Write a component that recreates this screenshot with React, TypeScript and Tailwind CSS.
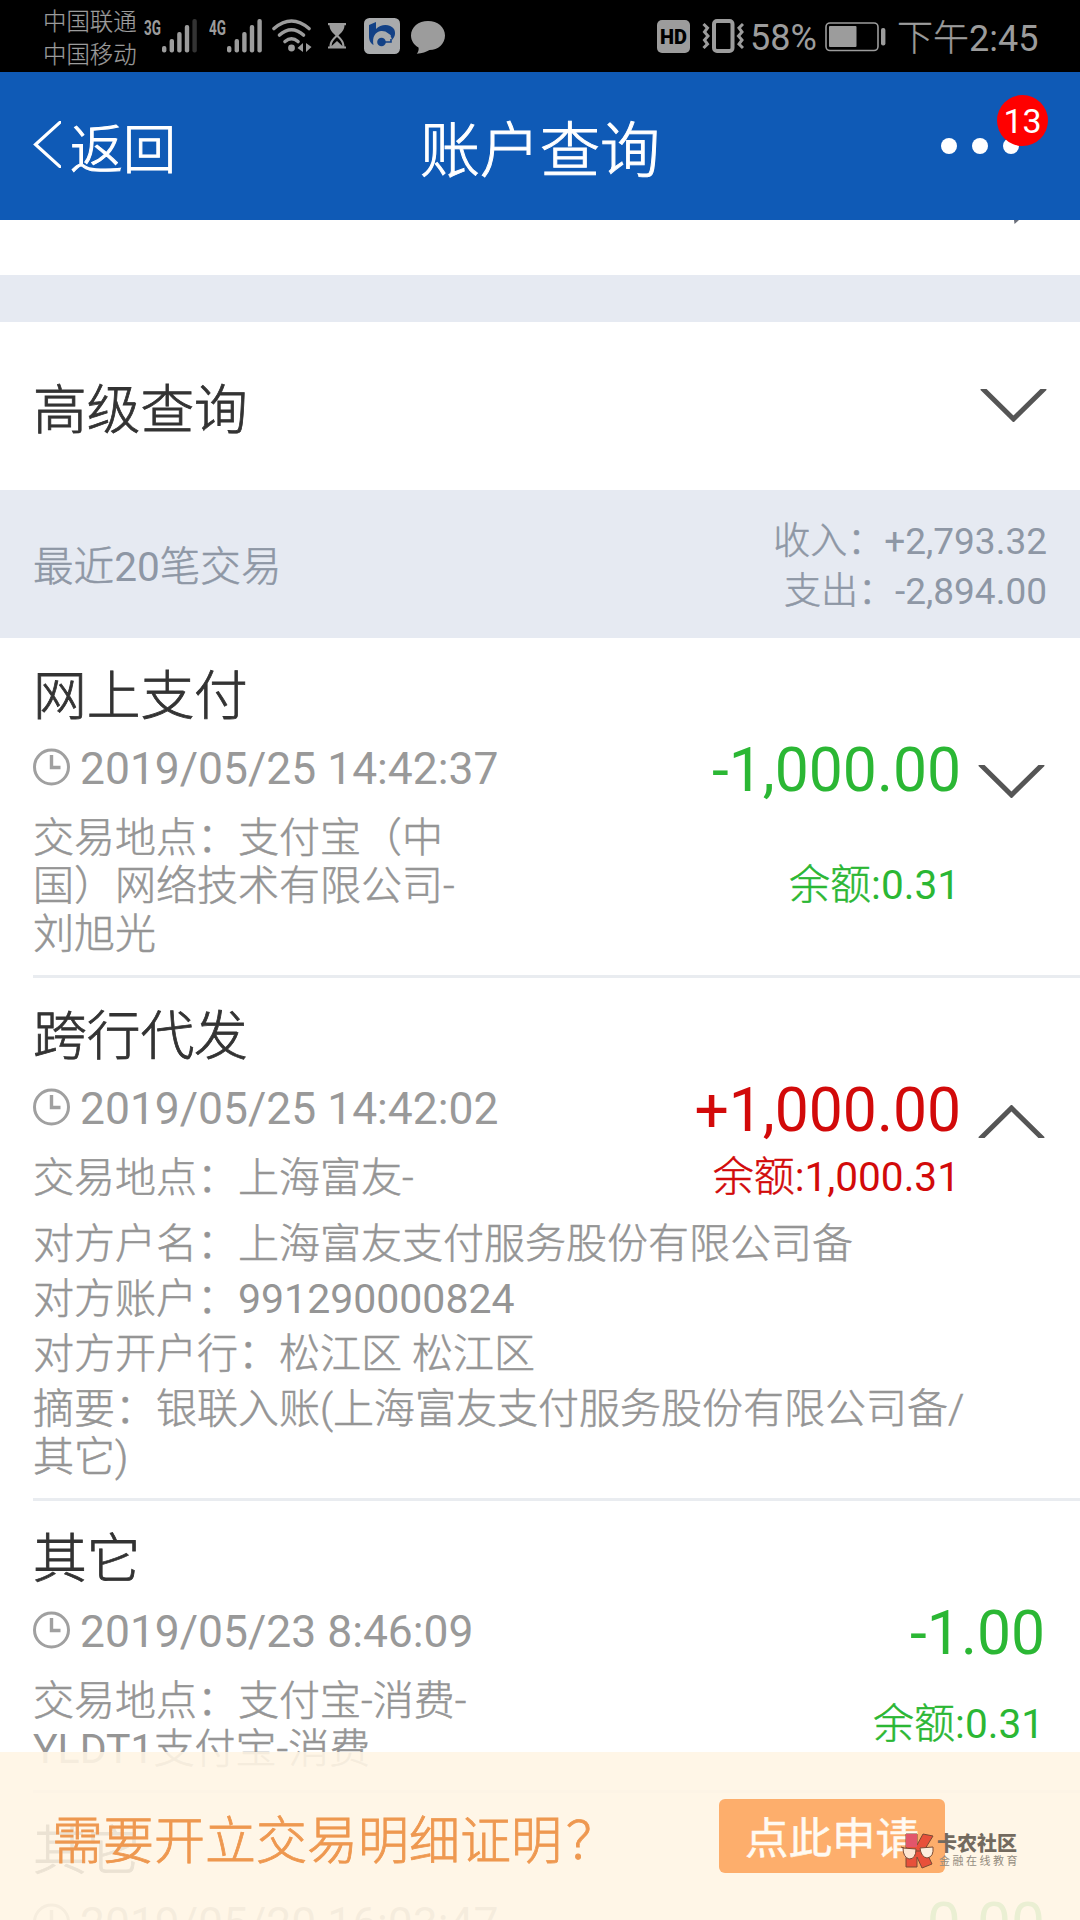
import React from 'react';

type Transaction = {
  title: string;
  time: string;
  place: string;
  amount: string;
  balance: string;
  toggle?: 'down' | 'up';
  details?: string[];
};

const transactions: Transaction[] = [
  {
    title: '网上支付',
    time: '2019/05/25 14:42:37',
    place: '交易地点：支付宝（中\n国）网络技术有限公司-\n刘旭光',
    amount: '-1,000.00',
    balance: '0.31',
    toggle: 'down',
  },
  {
    title: '跨行代发',
    time: '2019/05/25 14:42:02',
    place: '交易地点：上海富友-',
    amount: '+1,000.00',
    balance: '1,000.31',
    toggle: 'up',
    details: [
      '对方户名：上海富友支付服务股份有限公司备',
      '对方账户：991290000824',
      '对方开户行：松江区 松江区',
      '摘要：银联入账(上海富友支付服务股份有限公司备/\n其它)',
    ],
  },
  {
    title: '其它',
    time: '2019/05/23 8:46:09',
    place: '交易地点：支付宝-消费-\nYLDT1支付宝-消费',
    amount: '-1.00',
    balance: '0.31',
  },
  {
    title: '其它',
    time: '2019/05/20 16:03:47',
    place: '交易地点：支付宝-消费-',
    amount: '0.00',
    balance: '1.31',
  },
];

// Chinese stays light, latin letters and digits use the regular weight
const Mixed: React.FC<{ text: string }> = ({ text }) => (
  <>
    {text.split(/([0-9A-Z:]+)/).map((part, index) =>
      index % 2 ? (
        <span key={index} className="font-normal [-webkit-text-stroke:0px]">
          {part}
        </span>
      ) : (
        part
      ),
    )}
  </>
);

const Chevron: React.FC<{ up?: boolean }> = ({ up }) => (
  <svg width="67" height="33" viewBox="0 0 67 33" className={up ? 'rotate-180' : ''}>
    <path d="M2 -1 L33.5 30 L65 -1" fill="none" stroke="#555555" strokeWidth="5" />
  </svg>
);

const Clock = () => (
  <svg width="37" height="38" viewBox="0 0 37 38" className="-mt-1">
    <circle cx="18.5" cy="19" r="17" fill="none" stroke="#a0a0a0" strokeWidth="3" />
    <path d="M18.5 7 V19.5 H27.5" fill="none" stroke="#a0a0a0" strokeWidth="3.4" />
  </svg>
);

const Signal: React.FC<{ label: string; weak?: boolean }> = ({ label, weak }) => (
  <svg width="53" height="34" viewBox="0 0 53 34" fill="#9c9c9c" className="shrink-0">
    <text
      x="0"
      y="15.5"
      textLength="17"
      lengthAdjust="spacingAndGlyphs"
      className="font-[Roboto] text-[20px] font-bold"
    >
      {label}
    </text>
    <rect x="18" y="27" width="4.4" height="6.5" rx="2" />
    <rect x="25.6" y="20" width="4.4" height="13.5" rx="2" />
    <rect x="33.2" y="13" width="4.4" height="20.5" rx="2" />
    <rect x="40.8" y="6" width="4.4" height="27.5" rx="2" />
    <rect x="48.4" y="0" width="4.4" height="33.5" rx="2" fill={weak ? '#333333' : '#9c9c9c'} />
  </svg>
);

const StatusBar = () => (
  <div className="flex h-[72px] items-center bg-black text-[#9c9c9c]">
    <div className="mt-[5px] ml-[43px] w-[101px] shrink-0 text-[23.4px] leading-[33px] font-light [-webkit-text-stroke:0.2px]">
      <p>中国联通</p>
      <p>中国移动</p>
    </div>
    <Signal label="3G" weak />
    <div className="ml-[12px] flex">
      <Signal label="4G" />
    </div>
    <svg width="40" height="34" viewBox="0 0 40 34" className="ml-[10px]" fill="none" stroke="#9c9c9c">
      <g strokeWidth="3.6" strokeLinecap="round">
        <path d="M2 9.5 Q19.5 -5.5 37 9.5" />
        <path d="M7.5 16 Q19.5 5.5 31.5 16" />
        <path d="M13 22.5 Q19.5 17 26 22.5" />
      </g>
      <g fill="#9c9c9c" stroke="none">
        <circle cx="19.5" cy="29" r="3.4" />
        <path d="M31 24 V33 L25.5 29 Z M34 24 L39.5 28 L34 33 Z" />
      </g>
    </svg>
    <svg width="20" height="26" viewBox="0 0 20 26" className="ml-[15px]" fill="#9c9c9c">
      <path d="M1 0 H19 V2.2 H17.5 C17.5 7 14 10 11.5 12.5 C14 15 17.5 18 17.5 23.5 H19 V25.5 H1 V23.5 H2.5 C2.5 18 6 15 8.5 12.5 C6 10 2.5 7 2.5 2.2 H1 Z" />
      <path d="M10 14 C7 16.5 4.8 19 4.6 23 L10 18 L15.4 23 C15.2 19 13 16.5 10 14 Z" fill="#000000" />
    </svg>
    <svg width="36" height="36" viewBox="0 0 36 36" className="ml-[17px]">
      <rect width="36" height="36" rx="5.5" fill="#a9abad" />
      <path d="M5 7 L12 4 V11 C17 5.5 26 5.5 30 11 C32 15 31 19 28 22 C27 16 22 12.5 17 13 C11 14 8 19 9.5 27 C6 25 5 22 5 18 Z" fill="#134186" />
      <path d="M26 18.5 C22.5 15.5 17 15.5 14 19 C10 24 13 30 19 30 C22.5 30 25 28.5 26.5 26.5" fill="none" stroke="#a9abad" strokeWidth="3" />
      <circle cx="17.5" cy="24" r="4.3" fill="#134186" />
      <path d="M17 24 H27 V21" fill="none" stroke="#134186" strokeWidth="1.6" />
    </svg>
    <svg width="34" height="33" viewBox="0 0 34 33" className="mt-[2px] ml-[11px]" fill="#9c9c9c">
      <path d="M17 0 C26.5 0 34 6 34 14.5 C34 23 27 29 18.5 29 C15.5 30.5 11 32.6 5.8 32.8 C7.5 30.5 8 28.5 7.5 26.5 C3 24 0 19.5 0 14.5 C0 6 7.5 0 17 0 Z" />
    </svg>

    <svg width="33" height="33" viewBox="0 0 33 33" className="ml-[212px]">
      <rect width="33" height="33" rx="5" fill="#9c9c9c" />
      <text x="3" y="24" textLength="27" lengthAdjust="spacingAndGlyphs" className="font-[Roboto] text-[21px] font-black">
        HD
      </text>
    </svg>
    <svg width="42" height="34" viewBox="0 0 42 34" className="ml-[12px]" fill="none" stroke="#9c9c9c">
      <rect x="12" y="2" width="18.5" height="30" rx="3" strokeWidth="4" />
      <path d="M1.5 5 L5.5 9 L2.5 13 L6 17 L2.5 21 L5.5 25 L1.5 29" strokeWidth="3" />
      <path d="M41 5 L37 9 L40 13 L36.5 17 L40 21 L37 25 L41 29" strokeWidth="3" />
    </svg>
    <span className="mt-[3px] ml-[6px] w-[68px] text-[36px] leading-none">58%</span>
    <svg width="61" height="30" viewBox="0 0 61 30" className="mt-[1px] ml-[7px]">
      <rect x="1" y="1" width="52" height="27.5" rx="4" fill="none" stroke="#9c9c9c" strokeWidth="1.6" />
      <rect x="4" y="4" width="27.5" height="21" rx="1" fill="#9c9c9c" />
      <rect x="56" y="6" width="4.4" height="17.5" rx="2" fill="#9c9c9c" />
    </svg>
    <span className="mt-[5px] ml-[11px] text-[36px] leading-none font-light whitespace-nowrap [-webkit-text-stroke:0.3px]">
      <Mixed text="下午2:45" />
    </span>
  </div>
);

const Header = () => (
  <header className="grid h-[148px] grid-cols-3 items-center bg-[#0f5ab6] text-white">
    <div className="flex items-center pl-[33px]">
      <svg width="28" height="47" viewBox="0 0 28 47" className="-mt-[3px]">
        <path d="M28.5 0 L2.5 23.5 L28.5 47" fill="none" stroke="#ffffff" strokeWidth="3.2" />
      </svg>
      <span className="mt-[10px] ml-[9px] text-[53px] leading-none font-light [-webkit-text-stroke:1px]">返回</span>
    </div>
    <h1 className="mt-[11px] text-center text-[60px] leading-none font-light [-webkit-text-stroke:1px]">账户查询</h1>
    <div className="relative flex justify-end gap-[15px] pr-[61px]">
      <i className="size-4 rounded-full bg-white" />
      <i className="size-4 rounded-full bg-white" />
      <i className="size-4 rounded-full bg-white" />
      <span className="absolute right-[32px] bottom-[8px] flex size-[51px] items-center justify-center rounded-full bg-[#ff0000] pt-px text-[34px] leading-none">
        13
      </span>
    </div>
  </header>
);

const TransactionItem: React.FC<{ item: Transaction }> = ({ item }) => {
  const color = item.amount.startsWith('+') ? 'text-[#d20a0a]' : 'text-[#2bb734]';
  return (
    <li className="ml-[33px] border-b-[3px] border-[#e9ecf0] pt-[22px] pb-[17px]">
      <h2 className="h-[71px] text-[53.7px] leading-[73px] font-light text-[#333333] [-webkit-text-stroke:0.8px]">
        {item.title}
      </h2>
      <div className="flex h-[75px] items-center text-[#999999]">
        <Clock />
        <span className="ml-[10px] pt-[1px] text-[44.4px] leading-none">{item.time}</span>
        <span
          className={`ml-auto pt-[5px] text-[60.6px] leading-none ${color} ${item.toggle ? 'mr-[17px]' : 'mr-[35px]'}`}
        >
          {item.amount}
        </span>
        {item.toggle && (
          <div className="mt-[26px] mr-[35px]">
            <Chevron up={item.toggle === 'up'} />
          </div>
        )}
      </div>
      <div className="mt-[8px] flex items-center justify-between text-[41px] leading-[48px]">
        <p className="font-light whitespace-pre text-[#959595] [-webkit-text-stroke:0.5px]">
          <Mixed text={item.place} />
        </p>
        <p className={`-mt-[2px] ${color} ${item.toggle ? 'mr-[120px]' : 'mr-[36px]'}`}>
          <span className="font-light [-webkit-text-stroke:0.5px]">余额</span>
          <span className="text-[40.6px]">:{item.balance}</span>
        </p>
      </div>
      {item.details && (
        <div className="mt-[18px] flex flex-col gap-[7px] text-[41px] leading-[48px] font-light whitespace-pre text-[#959595] [-webkit-text-stroke:0.5px]">
          {item.details.map((line) => (
            <p key={line}>
              <Mixed text={line} />
            </p>
          ))}
        </div>
      )}
    </li>
  );
};

const Watermark = () => (
  <div className="absolute top-[1833px] left-[900px] flex items-start">
    <svg width="35" height="36" viewBox="0 0 35 36" stroke="#7a4a35" strokeWidth="1">
      <path d="M6 1 H17 V12 L23 1 L33 3 L25 16 L32 31 L22 35 L17 24 V34 H6 Z" fill="#e8503a" />
      <path d="M6 1 H17 V14 H6 Z" fill="#e2566b" stroke="none" />
      <path d="M1 14 L4 15 M16 18 H20" fill="none" />
      <path d="M3 15 L16 16 Q16 26 9 26 Q3 24 3 15 Z" fill="#fde6d2" />
      <path d="M20 15 L33 14 Q34 24 27 25 Q21 24 20 15 Z" fill="#fdeedd" />
    </svg>
    <div className="ml-[2px] whitespace-nowrap">
      <p className="text-[20px] leading-[22px] font-black text-[#736a5f]">卡农社区</p>
      <p className="ml-[2px] text-[11px] leading-[13px] tracking-[2.5px] text-[#938b7e]">金融在线教育</p>
    </div>
  </div>
);

const App = () => {
  return (
    <div
      lang="zh-CN"
      className="relative h-[1920px] w-[1080px] overflow-hidden bg-white font-[Roboto,'Noto_Sans_CJK_SC',sans-serif]"
    >
      <StatusBar />
      <Header />
      <div className="flex h-[55px] justify-end pr-[61px]">
        <svg width="5" height="4" viewBox="0 0 5 4">
          <path d="M0 0 H5 L0.5 4 Z" fill="#6b6f7a" />
        </svg>
      </div>
      <div className="h-[47px] bg-[#e6eaf2]" />
      <div className="flex h-[168px] items-center justify-between px-[33px]">
        <span className="mt-[10px] text-[53.7px] leading-none font-light text-[#333333] [-webkit-text-stroke:0.8px]">
          高级查询
        </span>
        <div className="-mt-[2px]">
          <Chevron />
        </div>
      </div>
      <div className="flex h-[148px] items-center justify-between bg-[#e6eaf2] px-[33px] text-[#8e97a5]">
        <span className="mt-[6px] text-[40.6px] leading-none font-light [-webkit-text-stroke:0.5px]">
          <Mixed text="最近20笔交易" />
        </span>
        <div className="mt-[5px] text-right text-[37px] leading-[50px]">
          <p>
            <span className="font-light [-webkit-text-stroke:0.5px]">收入：</span>+2,793.32
          </p>
          <p>
            <span className="font-light [-webkit-text-stroke:0.5px]">支出：</span>-2,894.00
          </p>
        </div>
      </div>
      <ul>
        {transactions.map((item) => (
          <TransactionItem key={item.time} item={item} />
        ))}
      </ul>

      <div className="absolute bottom-0 left-0 flex h-[168px] w-full items-start bg-[#fff5e4]/90">
        <p className="mt-[54px] ml-[52px] text-[51px] leading-[72px] font-light text-[#ee9850] [-webkit-text-stroke:0.8px]">
          需要开立交易明细证明<span className="ml-[4px]">？</span>
        </p>
        <button className="absolute top-[47px] left-[719px] h-[74px] w-[226px] rounded-[6px] bg-[#fdae6c] pt-[8px] text-[43.5px] leading-none text-[#fffaf2] [-webkit-text-stroke:0.5px]">
          点此申请
        </button>
      </div>
      <Watermark />
    </div>
  );
};

export default App;
